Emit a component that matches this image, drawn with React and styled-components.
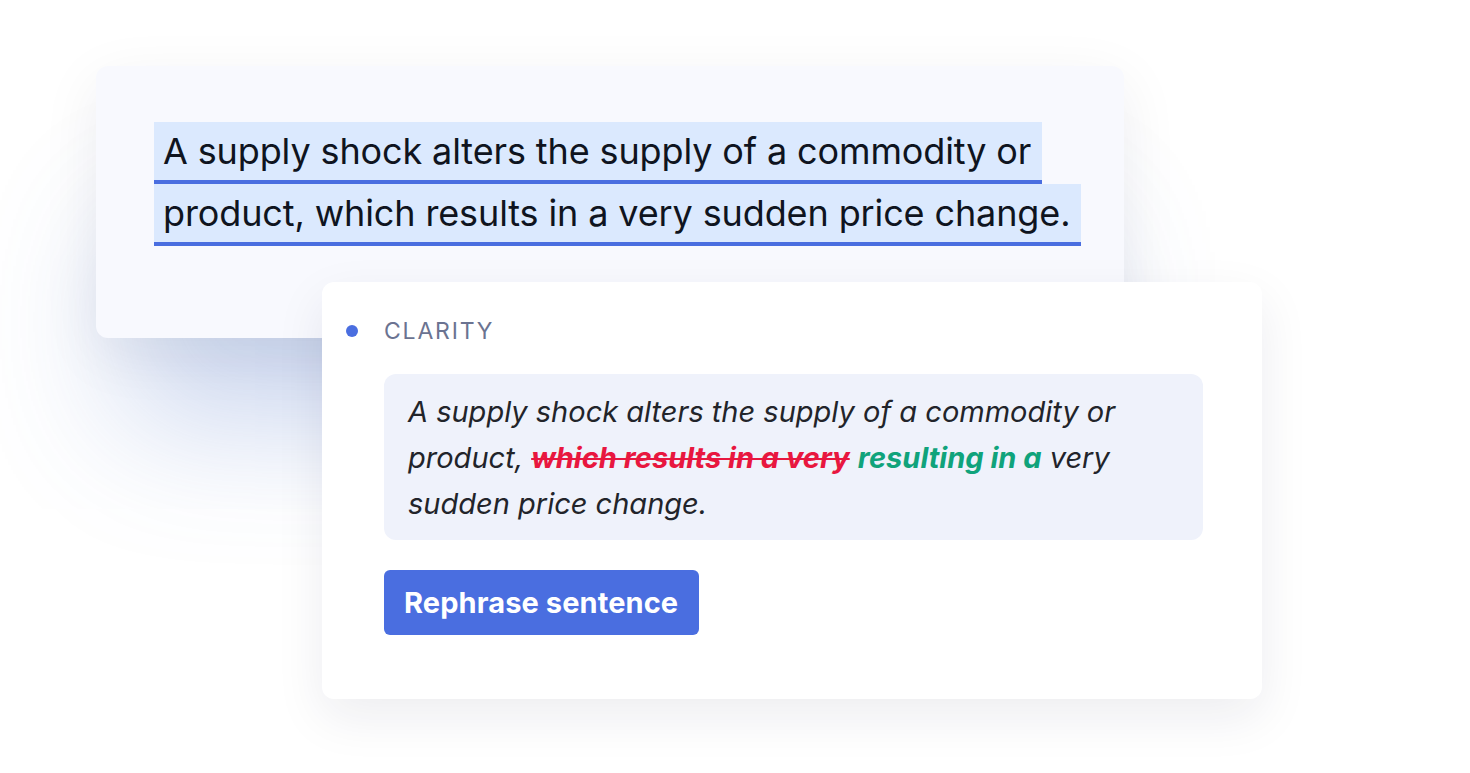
import React from 'react';
import styled, { createGlobalStyle } from 'styled-components';

const GlobalStyle = createGlobalStyle`
  html, body {
    margin: 0;
    padding: 0;
    background: #ffffff;
    font-family: Inter, "Noto Sans", sans-serif;
  }
`;

const Stage = styled.div`
  display: flex;
  flex-direction: column;
  align-items: flex-start;
  width: 1470px;
  height: 773px;
  box-sizing: border-box;
  padding: 66px 0 0 96px;
  overflow: hidden;
`;

const SourceCard = styled.div`
  box-sizing: border-box;
  width: 1028px;
  height: 272px;
  padding: 56px 0 0 58px;
  background-color: #f8f9fe;
  border-radius: 12px;
  box-shadow: 0 16px 60px rgba(20, 30, 60, 0.07),
    -10px 120px 140px -40px rgba(70, 110, 200, 0.3);
`;

const HighlightLine = styled.div`
  width: fit-content;
  padding: 0 11px 0 9px;
  font-size: 36px;
  line-height: 58px;
  letter-spacing: -0.12px;
  color: #0f1420;
  background-color: #dbe9fe;
  border-bottom: 4px solid #4a6ee0;
  white-space: nowrap;
`;

const SuggestionCard = styled.div`
  position: relative;
  z-index: 1;
  display: grid;
  grid-template-columns: 38px 819px;
  box-sizing: border-box;
  width: 940px;
  margin: -56px 0 0 226px;
  padding: 34px 0 64px 24px;
  background-color: #ffffff;
  border-radius: 12px;
  box-shadow: 0 18px 50px rgba(20, 30, 60, 0.08);
`;

const Dot = styled.span`
  align-self: center;
  width: 12px;
  height: 12px;
  border-radius: 50%;
  background-color: #4a6ee0;
`;

const Label = styled.div`
  font-size: 23px;
  line-height: 30px;
  letter-spacing: 1.8px;
  color: #6b7391;
`;

const Suggestion = styled.div`
  grid-column: 2;
  margin-top: 28px;
  box-sizing: border-box;
  padding: 15px 24px 13px;
  background-color: #eff2fb;
  border-radius: 12px;
  font-size: 29px;
  font-style: italic;
  line-height: 46px;
  color: #22242a;
  white-space: nowrap;
`;

const Removed = styled.span`
  font-weight: 700;
  color: #e8173f;
  text-decoration: line-through;
  text-decoration-thickness: 2px;
`;

const Added = styled.span`
  font-weight: 700;
  color: #10a37b;
`;

const ActionButton = styled.button`
  grid-column: 2;
  justify-self: start;
  margin-top: 30px;
  height: 65px;
  padding: 0 21px 0 20px;
  border: none;
  border-radius: 6px;
  background-color: #4a6ee0;
  color: #ffffff;
  font-family: Inter, "Noto Sans", sans-serif;
  font-size: 29px;
  font-weight: 700;
  letter-spacing: 0.1px;
  cursor: pointer;
`;

export default function App() {
  return (
    <>
      <GlobalStyle />
      <Stage>
        <SourceCard>
          <HighlightLine>A supply shock alters the supply of a commodity or</HighlightLine>
          <HighlightLine>product, which results in a very sudden price change.</HighlightLine>
        </SourceCard>

        <SuggestionCard>
          <Dot />
          <Label>CLARITY</Label>
          <Suggestion>
            A supply shock alters the supply of a commodity or
            <br />
            product, <Removed>which results in a very</Removed>{' '}
            <Added>resulting in a</Added> very
            <br />
            sudden price change.
          </Suggestion>
          <ActionButton>Rephrase sentence</ActionButton>
        </SuggestionCard>
      </Stage>
    </>
  );
}
